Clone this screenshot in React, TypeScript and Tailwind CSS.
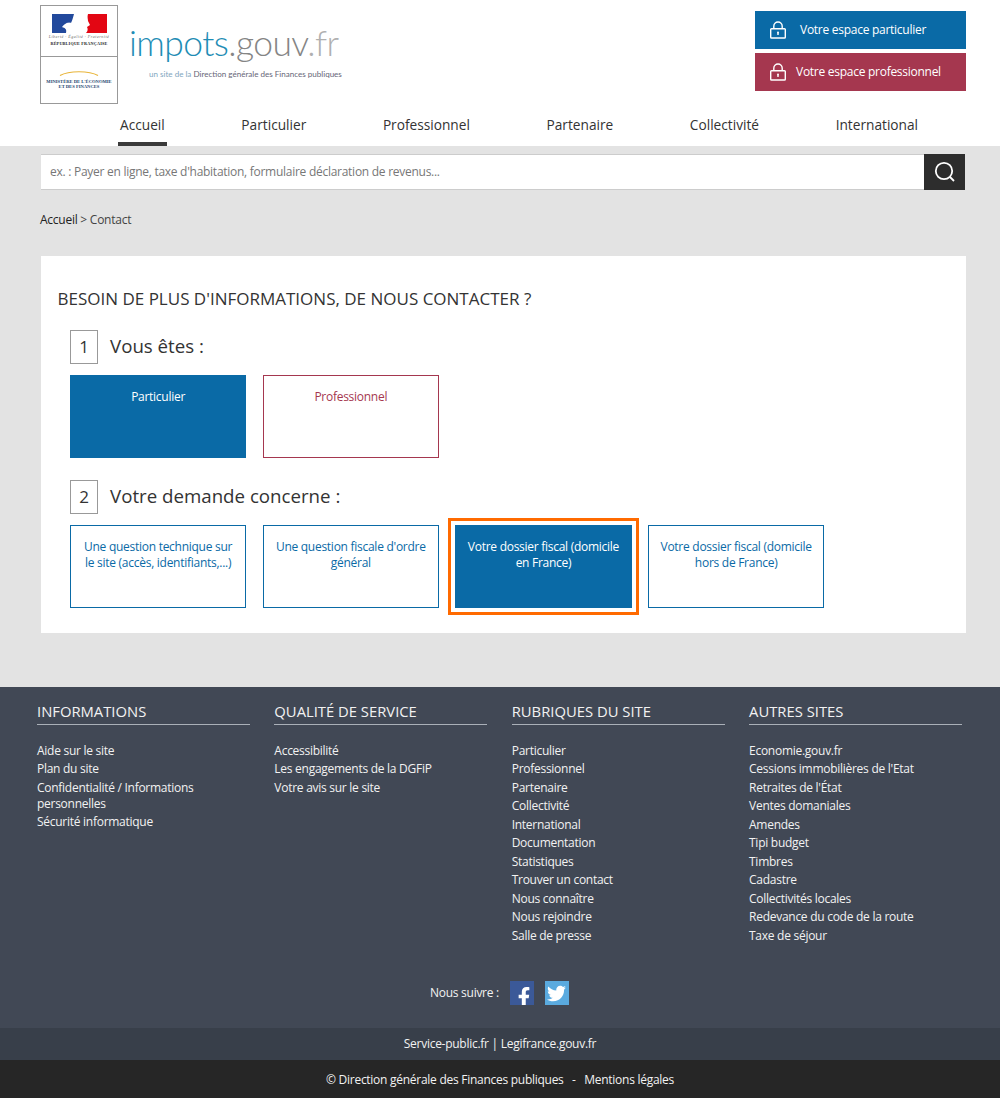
import { FaFacebookF, FaTwitter } from 'react-icons/fa';

const font = { fontFamily: '"Open Sans", sans-serif' };

const navItems = ['Accueil', 'Particulier', 'Professionnel', 'Partenaire', 'Collectivité', 'International'];

const footerColumns = [
  {
    title: 'INFORMATIONS',
    links: ['Aide sur le site', 'Plan du site', 'Confidentialité / Informations personnelles', 'Sécurité informatique'],
  },
  {
    title: 'QUALITÉ DE SERVICE',
    links: ['Accessibilité', 'Les engagements de la DGFiP', 'Votre avis sur le site'],
  },
  {
    title: 'RUBRIQUES DU SITE',
    links: [
      'Particulier',
      'Professionnel',
      'Partenaire',
      'Collectivité',
      'International',
      'Documentation',
      'Statistiques',
      'Trouver un contact',
      'Nous connaître',
      'Nous rejoindre',
      'Salle de presse',
    ],
  },
  {
    title: 'AUTRES SITES',
    links: [
      'Economie.gouv.fr',
      "Cessions immobilières de l'Etat",
      "Retraites de l'État",
      'Ventes domaniales',
      'Amendes',
      'Tipi budget',
      'Timbres',
      'Cadastre',
      'Collectivités locales',
      'Redevance du code de la route',
      'Taxe de séjour',
    ],
  },
];

function LockIcon() {
  return (
    <svg width="18" height="18" viewBox="0 0 18 18" fill="none" stroke="currentColor" strokeWidth="1.4">
      <rect x="1.7" y="7.7" width="14.6" height="9.3" rx="0.8" />
      <path d="M4.8 7.7V5.2a4.2 4.2 0 0 1 8.4 0v2.5" />
      <circle cx="9" cy="11.6" r="1" fill="currentColor" stroke="none" />
      <path d="M9 12v2" />
    </svg>
  );
}

function Logo() {
  return (
    <div className="flex items-start">
      <div className="w-[78px] h-[99px] border border-[#999] flex flex-col bg-white mt-[5px] shrink-0">
        <div className="h-[51px] border-b border-[#999] flex flex-col items-center pt-[8px]">
          {/* marianne */}
          <svg width="55" height="19" viewBox="0 0 55 19">
            <path d="M0 0H22C21 4 20 7 19 9C17 7 13 9 10 13C13 14 15 15 14 19H0Z" fill="#22499c" />
            <path d="M36 0H55V19H34C36 17 36 15 35 13L38 11L36 7C36 5 35 3 36 0Z" fill="#e30613" />
            <path d="M11 11c2-2 4-3 7-3" fill="none" stroke="#22499c" strokeWidth="0.8" />
          </svg>
          <div
            className="text-[4px] leading-[7px] text-[#666] italic tracking-[0.5px] whitespace-nowrap"
            style={{ fontFamily: '"Liberation Serif", serif' }}
          >
            Liberté · Égalité · Fraternité
          </div>
          <div
            className="text-[4.2px] leading-[6px] mt-[1px] font-bold text-[#222] tracking-[0.2px] whitespace-nowrap"
            style={{ fontFamily: '"Liberation Serif", serif' }}
          >
            RÉPUBLIQUE FRANÇAISE
          </div>
        </div>
        <div className="flex-1 flex flex-col items-center pt-[13px]">
          <svg width="40" height="6" viewBox="0 0 40 6">
            <path d="M1 5.5C10 .5 30 .5 39 5.5" fill="none" stroke="#e8b53a" strokeWidth="1.2" />
          </svg>
          <div
            className="text-[4.6px] leading-[5px] mt-[3px] font-bold text-[#24466f] text-center whitespace-nowrap"
            style={{ fontFamily: '"Liberation Serif", serif' }}
          >
            MINISTÈRE DE L'ÉCONOMIE
            <br />
            ET DES FINANCES
          </div>
        </div>
      </div>
      <div className="ml-[11px] mt-[21px]">
        <div className="text-[35.5px] leading-[44px] whitespace-nowrap tracking-[-0.6px]" style={{ fontFamily: 'Lato, sans-serif' }}>
          <span className="text-[#1f8db5] font-light">impots</span>
          <span className="text-[#858585] font-light">.gouv</span>
          <span className="text-[#b0b0b0] font-light">.fr</span>
        </div>
        <div className="text-[8.05px] leading-[10px] mt-[4px] ml-[20px] whitespace-nowrap" style={{ fontFamily: 'Lato, sans-serif' }}>
          <span className="text-[#7fa6c0]">un site de la </span>
          <span className="text-[#667]">Direction générale des Finances publiques</span>
        </div>
      </div>
    </div>
  );
}

function ChoiceBox({ label, variant }: { label: string; variant: 'active' | 'blue' | 'red' }) {
  const colors = {
    active: 'bg-[#0a6aa6] border-[#0a6aa6] text-white',
    blue: 'bg-white border-[#0a6aa6] text-[#0a6aa6]',
    red: 'bg-white border-[#a5374f] text-[#a5374f]',
  };
  return (
    <div className={`w-[176.2px] h-[83px] border px-[10px] pt-[13px] text-center text-[12px] tracking-[-0.27px] leading-[16px] ${colors[variant]}`}>
      {label}
    </div>
  );
}

function StepTitle({ step, label }: { step: string; label: string }) {
  return (
    <div className="flex items-center gap-[12px]">
      <div className="w-[28px] h-[34px] border border-[#999] flex items-center justify-center text-[17px] text-[#333]">{step}</div>
      <div className="text-[18.7px] leading-[24px] text-[#333] -mt-[3px]">{label}</div>
    </div>
  );
}

export default function App() {
  return (
    <div style={font} className="bg-white h-[1101px] overflow-hidden">
      <header className="bg-white h-[146px] pl-[40px] pr-[34px] relative flex justify-between">
        <Logo />
        <div className="flex flex-col gap-[4px] pt-[11px]">
          <div className="w-[211px] h-[38px] bg-[#0a6aa6] text-white flex items-center text-[12px] tracking-[-0.27px]">
            <div className="ml-[14px] w-[18px]">
              <LockIcon />
            </div>
            <span className="ml-[13px]">Votre espace particulier</span>
          </div>
          <div className="w-[211px] h-[38px] bg-[#a5374f] text-white flex items-center text-[12px] tracking-[-0.27px]">
            <div className="ml-[14px] w-[18px]">
              <LockIcon />
            </div>
            <span className="ml-[9px]">Votre espace professionnel</span>
          </div>
        </div>
        <nav className="absolute left-[118px] top-[112px] flex gap-[72.6px]">
          {navItems.map((item, i) => (
            <div
              key={item}
              className={`px-[2px] h-[34px] pt-[3px] text-[13.7px] leading-[20px] text-[#333] border-b-[4px] whitespace-nowrap ${
                i === 0 ? 'border-[#3a3a3a]' : 'border-transparent'
              }`}
            >
              {item}
            </div>
          ))}
        </nav>
      </header>

      <main className="bg-[#e3e3e3] h-[541px] px-[41px] pt-[8px]">
        <div className="flex h-[36px] w-[924px]">
          <div className="flex-1 bg-white border-t border-b border-[#ccc] flex items-center pl-[9px] text-[12px] tracking-[-0.27px] text-[#777]">
            ex. : Payer en ligne, taxe d'habitation, formulaire déclaration de revenus...
          </div>
          <div className="w-[41px] bg-[#2d2d2d] flex items-center justify-center text-white">
            <svg width="22" height="22" viewBox="0 0 22 22" fill="none" stroke="currentColor" strokeWidth="1.8">
              <circle cx="10" cy="10" r="8.2" />
              <path d="M16 16l4 4" />
            </svg>
          </div>
        </div>
        <div className="mt-[22px] text-[12px] tracking-[-0.25px] leading-[16px] text-[#444] -ml-[1px]">
          <span className="text-[#222]">Accueil</span> &gt; Contact
        </div>
        <section className="mt-[28px] w-[925px] h-[377px] bg-white pt-[32px] pl-[16.5px]">
          <h1 className="text-[17px] leading-[22px] text-[#333]">BESOIN DE PLUS D'INFORMATIONS, DE NOUS CONTACTER ?</h1>
          <div className="ml-[12.5px] mt-[20px]">
            <StepTitle step="1" label="Vous êtes :" />
            <div className="flex gap-[16.5px] mt-[11px]">
              <ChoiceBox label="Particulier" variant="active" />
              <ChoiceBox label="Professionnel" variant="red" />
            </div>
            <div className="mt-[22px]">
              <StepTitle step="2" label="Votre demande concerne :" />
            </div>
            <div className="flex gap-[16.5px] mt-[11px]">
              <ChoiceBox label="Une question technique sur le site (accès, identifiants,...)" variant="blue" />
              <ChoiceBox label="Une question fiscale d'ordre général" variant="blue" />
              <div className="outline-[3px] outline-[#ff6a00] outline-offset-[4px]">
                <ChoiceBox label="Votre dossier fiscal (domicile en France)" variant="active" />
              </div>
              <ChoiceBox label="Votre dossier fiscal (domicile hors de France)" variant="blue" />
            </div>
          </div>
        </section>
      </main>

      <footer className="bg-[#414855] text-[#f2f2f2]">
        <div className="h-[341px] pl-[37px] pr-[38px] pt-[13px] relative">
          <div className="grid grid-cols-4 gap-x-[24.4px]">
            {footerColumns.map((col) => (
              <div key={col.title}>
                <div className="text-[14.8px] leading-[22px] border-b border-[#aab0b8] pb-[2px]">{col.title}</div>
                <ul className="mt-[17.5px] text-[12px] tracking-[-0.27px] leading-[16px] flex flex-col gap-[2.5px]">
                  {col.links.map((link) => (
                    <li key={link}>{link}</li>
                  ))}
                </ul>
              </div>
            ))}
          </div>
          <div className="absolute left-[430px] top-[294px] flex items-center text-[12px] tracking-[-0.27px]">
            <span>Nous suivre :</span>
            <div className="ml-[11px] w-[24px] h-[24px] bg-[#3b5998] flex items-end justify-center overflow-hidden">
              <FaFacebookF className="text-white text-[20px] translate-x-[2px] translate-y-[2px]" />
            </div>
            <div className="ml-[11px] w-[24px] h-[24px] bg-[#5aaadf] flex items-center justify-center">
              <FaTwitter className="text-white text-[19px]" />
            </div>
          </div>
        </div>
        <div className="h-[32px] bg-[#383f4a] flex items-center justify-center text-[12px] tracking-[-0.27px]">Service-public.fr | Legifrance.gouv.fr</div>
        <div className="h-[38px] pt-[1px] bg-[#262626] flex items-center justify-center text-[12px] tracking-[-0.27px] whitespace-pre">
          © Direction générale des Finances publiques {'  '}-{'   '}Mentions légales
        </div>
      </footer>
    </div>
  );
}
